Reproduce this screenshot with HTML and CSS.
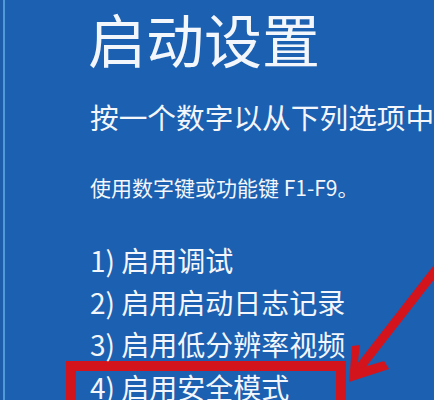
FILE: index.html
```html
<!DOCTYPE html>
<html lang="zh-CN">
<head>
<meta charset="utf-8">
<title>启动设置</title>
<link rel="stylesheet" href="styles.css">
</head>
<body>
<div class="screen">
  <h1 class="title">启动设置</h1>
  <p class="lead">按一个数字以从下列选项中</p>
  <p class="hint">使用数字键或功能键 F1-F9。</p>
  <ol class="options">
    <li class="option">1) 启用调试</li>
    <li class="option">2) 启用启动日志记录</li>
    <li class="option">3) 启用低分辨率视频</li>
    <li class="option option-marked">4) 启用安全模式</li>
  </ol>
  <svg class="arrow" width="434" height="400" viewBox="0 0 434 400" aria-hidden="true">
    <line x1="442" y1="262" x2="354" y2="375" stroke="#d3141c" stroke-width="9"/>
    <polygon points="352,346 360,345 357,369 384,361 389,369 349,382" fill="#d3141c"/>
  </svg>
</div>
</body>
</html>
```
FILE: styles.css
```css
html, body {
  margin: 0;
  padding: 0;
}
body {
  width: 434px;
  height: 400px;
  overflow: hidden;
  background: #1b60b1;
}
.screen {
  position: relative;
  width: 434px;
  height: 400px;
  overflow: hidden;
  box-sizing: border-box;
  padding-left: 88px;
  padding-top: 3px;
  background: #1b60b1;
  color: #f3f6fb;
  font-family: "Noto Sans CJK SC", "Noto Sans", sans-serif;
  box-shadow: inset 3px 0 0 #1c5ca8, inset 5px 0 0 #4f9ad9;
}
.title {
  margin: 0;
  font-size: 58px;
  line-height: 70px;
  font-weight: 400;
  white-space: nowrap;
}
.lead {
  margin: 26px 0 0 2px;
  font-size: 28.7px;
  line-height: 36px;
  white-space: nowrap;
}
.hint {
  margin: 38px 0 0 2px;
  font-size: 21px;
  line-height: 28px;
  white-space: nowrap;
}
.options {
  list-style: none;
  margin: 38px 0 0 2px;
  padding: 0;
}
.option {
  font-size: 28px;
  line-height: 42px;
  white-space: nowrap;
}
.option-marked {
  box-sizing: border-box;
  width: 280px;
  margin: -4px 0 0 -24px;
  padding: 0 0 40px 14px;
  border: 10px solid #d3141c;
  border-bottom: none;
  line-height: 32px;
}
.arrow {
  position: absolute;
  left: 0;
  top: 0;
}
```
